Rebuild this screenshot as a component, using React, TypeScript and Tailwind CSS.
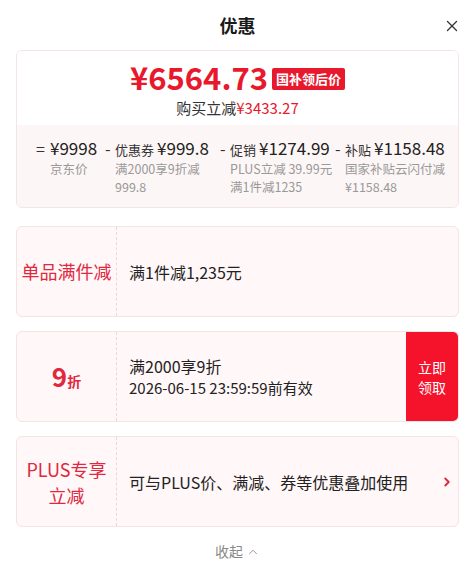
import { ChevronUp, ChevronRight, X } from "lucide-react";

const font = { fontFamily: '"Noto Sans CJK SC", "Noto Sans", sans-serif' };

interface IPropsPart {
  sign: string;
  signWidth: string;
  label?: string;
  amount: string;
  subs: string[];
  width: string;
}

function Part({ sign, signWidth, label, amount, subs, width }: IPropsPart) {
  return (
    <div className={`flex ${width}`}>
      <span className={`${signWidth} shrink-0 text-[16px] leading-[24px] text-[#333]`}>{sign}</span>
      <div className="flex flex-col">
        <div className="flex items-baseline gap-[3px] whitespace-nowrap">
          {label && <span className="text-[13px] text-[#333]">{label}</span>}
          <span className="text-[17px] leading-[24px] text-[#222]">{amount}</span>
        </div>
        {subs.map((s) => (
          <span key={s} className="whitespace-nowrap text-[12.5px] leading-[18px] text-[#999]">{s}</span>
        ))}
      </div>
    </div>
  );
}

export default function App() {
  return (
    <div className="w-[475px] h-[565px] bg-white overflow-hidden" style={font}>
      <div className="relative flex h-[50px] items-center justify-center">
        <span className="text-[18px] font-bold text-[#1a1a1a]">优惠</span>
        <X className="absolute right-[14px] top-[17px] text-[#333]" size={18} strokeWidth={1.7} />
      </div>

      <div className="mx-[16px] flex flex-col gap-[14px]">
        <div className="mb-[4px] h-[158px] rounded-[6px] border border-[#f3e4e6] overflow-hidden">
          <div className="flex h-[74px] flex-col items-center bg-white pt-[6px]">
            <div className="flex items-center gap-[4px]">
              <span className="text-[31px] leading-[40px] font-bold text-[#e8192c]">¥6564.73</span>
              <span className="mt-[3px] rounded-[2px] bg-[#e8192c] px-[4px] text-[13px] leading-[22px] font-bold text-white">
                国补领后价
              </span>
            </div>
            <div className="text-[15px] leading-[22px] text-[#333]">
              购买立减<span className="text-[#e8192c]">¥3433.27</span>
            </div>
          </div>
          <div className="flex h-[84px] bg-[#fdf6f6] pl-[19px] pt-[11px]">
            <Part sign="=" signWidth="w-[14px]" amount="¥9998" subs={["京东价"]} width="w-[69px]" />
            <Part sign="-" signWidth="w-[10px]" label="优惠券" amount="¥999.8" subs={["满2000享9折减", "999.8"]} width="w-[115px]" />
            <Part sign="-" signWidth="w-[10px]" label="促销" amount="¥1274.99" subs={["PLUS立减 39.99元", "满1件减1235"]} width="w-[115px]" />
            <Part sign="-" signWidth="w-[10px]" label="补贴" amount="¥1158.48" subs={["国家补贴云闪付减", "¥1158.48"]} width="flex-1" />
          </div>
        </div>

        <div className="flex h-[91px] rounded-[6px] border border-[#f3e4e6] bg-[#fff7f8] overflow-hidden">
          <div className="flex w-[100px] items-center justify-center border-r border-dashed border-[#ecd6d9] text-[18px] text-[#e0283f]">
            单品满件减
          </div>
          <div className="flex flex-1 items-center pl-[12px] text-[16px] text-[#222]">满1件减1,235元</div>
        </div>

        <div className="flex h-[91px] rounded-[6px] border border-[#f3e4e6] bg-[#fff7f8] overflow-hidden">
          <div className="flex w-[100px] items-baseline justify-center pt-[28px] border-r border-dashed border-[#ecd6d9] text-[#e0283f] font-bold">
            <span className="text-[26px] leading-[32px]">9</span>
            <span className="text-[14px]">折</span>
          </div>
          <div className="flex flex-1 flex-col justify-center pl-[12px] text-[#222]">
            <span className="text-[16px] leading-[22px]">满2000享9折</span>
            <span className="text-[15px] leading-[22px]">2026-06-15 23:59:59前有效</span>
          </div>
          <div className="flex w-[52px] flex-col items-center justify-center bg-[#f5132b] text-[14px] leading-[20px] text-white">
            <span>立即</span>
            <span>领取</span>
          </div>
        </div>

        <div className="flex h-[91px] rounded-[6px] border border-[#f3e4e6] bg-[#fff7f8] overflow-hidden">
          <div className="flex w-[100px] flex-col items-center justify-center border-r border-dashed border-[#ecd6d9] text-[18px] leading-[26px] text-[#e0283f]">
            <span>PLUS专享</span>
            <span>立减</span>
          </div>
          <div className="flex flex-1 items-center justify-between pl-[12px] pr-[4px] text-[16px] text-[#222]">
            <span>可与PLUS价、满减、券等优惠叠加使用</span>
            <ChevronRight className="text-[#e0283f]" size={14} strokeWidth={3.2} />
          </div>
        </div>
      </div>

      <div className="mt-[14px] flex items-center justify-center gap-[3px] text-[14px] text-[#888]">
        <span>收起</span>
        <ChevronUp size={14} strokeWidth={1.5} />
      </div>
    </div>
  );
}
